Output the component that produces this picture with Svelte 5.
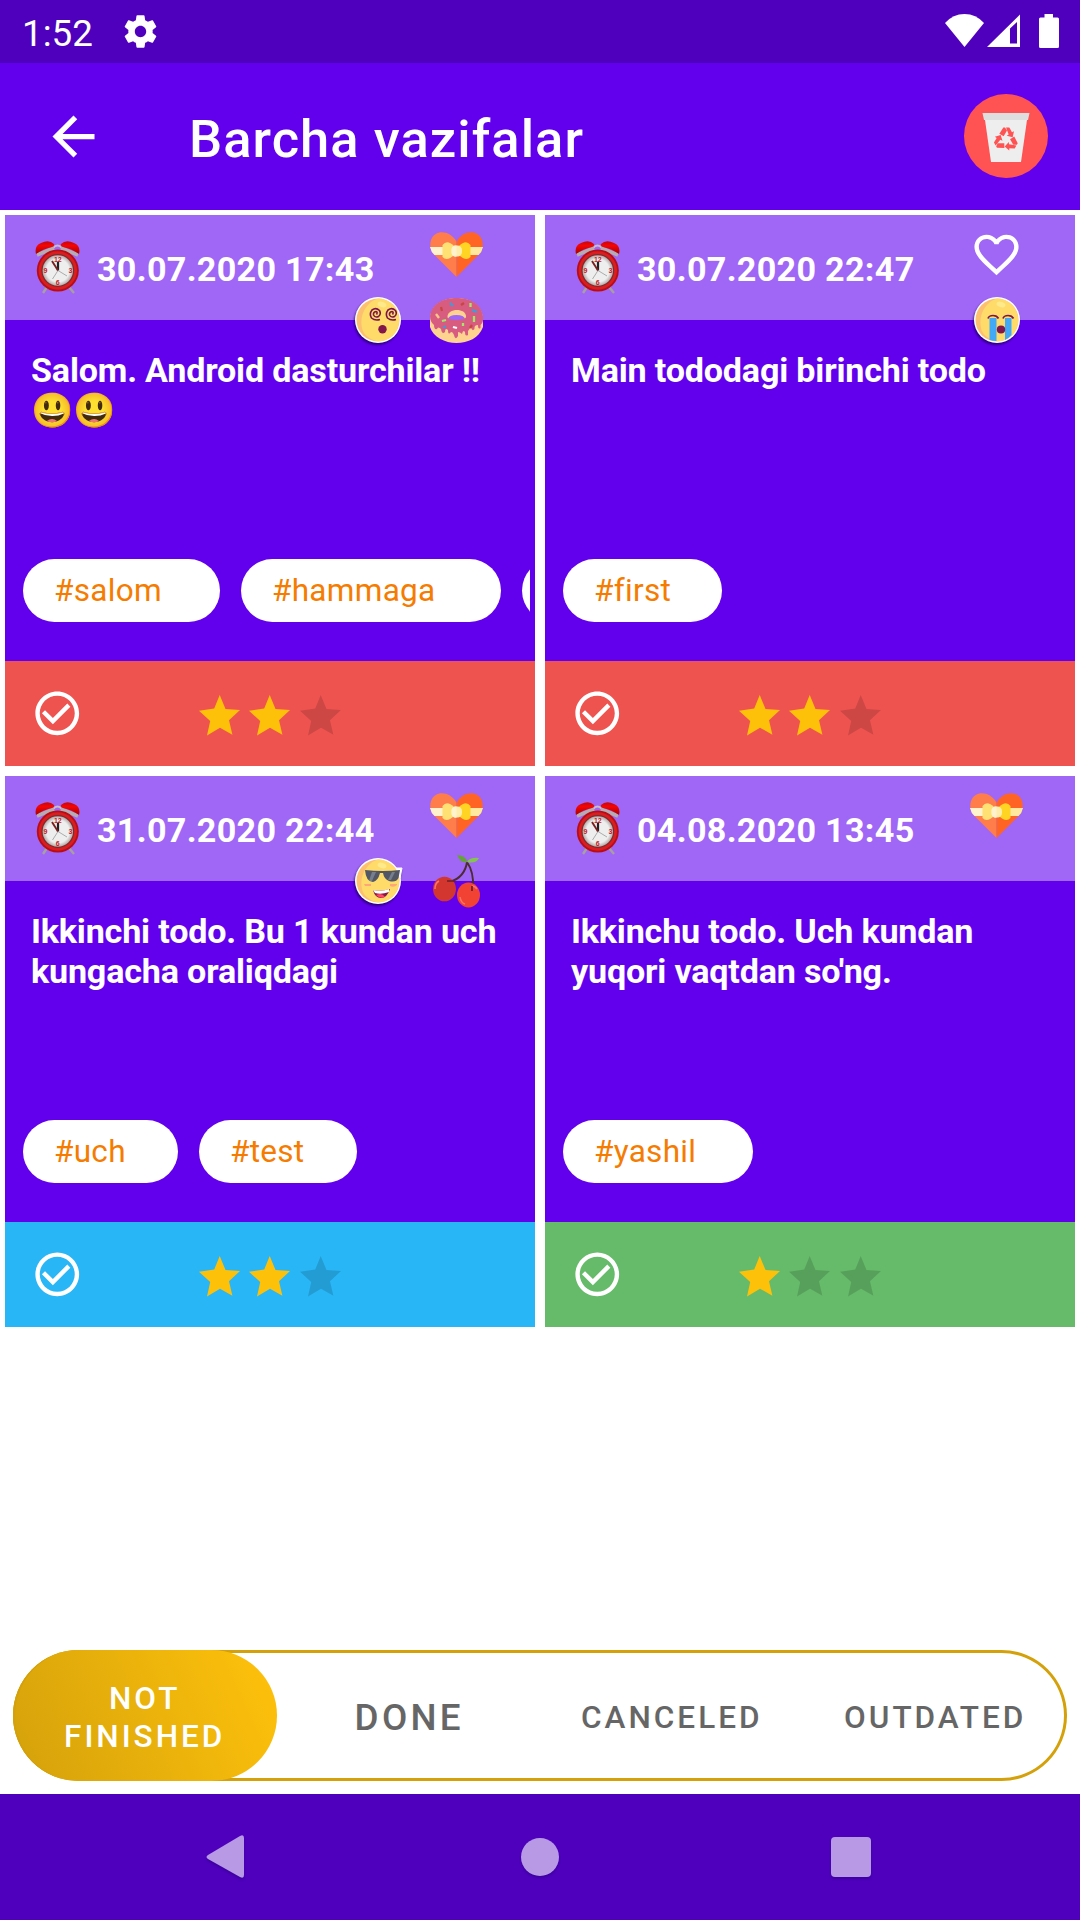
<script>
  const cards = [
    { date: '30.07.2020 17:43', text: 'Salom. Android dasturchilar !! 😃😃', tags: [['#salom', 197], ['#hammaga', 260], ['', 197]], tone: 'red', stars: 2, loved: true, faces: ['dizzy', 'donut'] },
    { date: '30.07.2020 22:47', text: 'Main tododagi birinchi todo', tags: [['#first', 159]], tone: 'red', stars: 2, loved: false, faces: ['crying'] },
    { date: '31.07.2020 22:44', text: 'Ikkinchi todo. Bu 1 kundan uch kungacha oraliqdagi', tags: [['#uch', 155], ['#test', 158]], tone: 'blue', stars: 2, loved: true, faces: ['cool', 'cherry'] },
    { date: '04.08.2020 13:45', text: "Ikkinchu todo. Uch kundan yuqori vaqtdan so'ng.", tags: [['#yashil', 190]], tone: 'green', stars: 1, loved: true, faces: [] }
  ];
</script>

{#snippet clock()}
  <svg class="clock" viewBox="0 0 45 53">
    <defs>
      <linearGradient id="bell" x1="0" y1="0" x2="0" y2="1"><stop offset="0" stop-color="#c40808" /><stop offset=".35" stop-color="#f50505" /><stop offset="1" stop-color="#a80000" /></linearGradient>
      <radialGradient id="dial"><stop offset=".75" stop-color="#eeeeee" /><stop offset="1" stop-color="#b5aaaa" /></radialGradient>
    </defs>
    <path d="M12 46l-4 6M34 46l5 6" stroke="#a7a0a0" stroke-width="2.4" />
    <path d="M18 7Q22.5 2 27 7" fill="none" stroke="#c8bdc4" stroke-width="2" />
    <path d="M2 14L19 7M43 14L26 7" stroke="#b5adb2" stroke-width="3.6" />
    <path d="M1 13Q-1 5 6 2Q14-2 19 3Q20 5 17 6Q8 8 1 13ZM44 13Q46 5 39 2Q31-2 26 3Q25 5 28 6Q37 8 44 13Z" fill="url(#bell)" />
    <circle cx="22.8" cy="29.5" r="21" fill="#b80d12" />
    <circle cx="22.8" cy="29.5" r="19.2" fill="#da1d20" />
    <circle cx="22.8" cy="29.5" r="16.4" fill="#7d2a2a" />
    <circle cx="22.8" cy="29.5" r="15.2" fill="url(#dial)" />
    <g class="numerals"><text x="22.8" y="21.4">12</text><text x="35.4" y="32">3</text><text x="22.8" y="44.3">6</text><text x="10.4" y="32.4">9</text></g>
    <path d="M23 29.5V20.8" stroke="#222" stroke-width="2.2" />
    <path d="M23 29.5L17 20" stroke="#7a2222" stroke-width="1.9" />
    <path d="M23 29.5L32 35M23 29.5L17.5 38" stroke="#9b9b9b" stroke-width=".8" />
  </svg>
{/snippet}

{#snippet giftHeart()}
  <svg class="mark" viewBox="0 0 53 53">
    <path d="M26.5 13.5C20 2 5 1 1 12C-.5 16 0 22 4 26.500L26.500 49Z" fill="#ff7c4b" />
    <path d="M26.500 13.500C33 2 48 1 52 12C53.500 16 53 22 49 26.500L26.500 49Z" fill="#ff6425" />
    <path d="M0 19H26.500V27H4.500Q1 24 0 19Z" fill="#fff3cd" />
    <path d="M53 19H26.500V27H48.500Q52 24 53 19Z" fill="#ffe99f" />
    <path d="M24 18Q17 11 12.500 17V29Q17 34 24 27Z" fill="#ffe073" />
    <path d="M29 18Q36 11 40.500 17V29Q36 34 29 27Z" fill="#ffd422" />
    <rect x="21.500" y="17.500" width="10.500" height="11" rx="4.500" fill="#ffedac" />
    <path d="M26.500 17.500H25A4 4 0 0 0 21.500 22V25A4 4 0 0 0 26.500 28.500Z" fill="#fff3cd" />
  </svg>
{/snippet}

{#snippet face(kind)}
  {#if kind === 'donut'}
    <svg class="mark" viewBox="0 0 53 53">
      <path fill-rule="evenodd" d="M0 23C2 10 14 4 26.500 4S51 10 53 23V33C49 44 38 49 26.500 49S3 43 0 33ZM18 25Q26.500 30 35 25Q34 21 26.500 21T18 25Z" fill="#fdd38f" />
      <path fill-rule="evenodd" d="M0 22C2 9 14 4 26.500 4S51 9 53 22Q54 28 50.500 31V34Q48 36 48 31Q44 31 44.500 35Q42 38 41 33L38 37V41Q35 43 35 38Q33 35 32 40Q30 38 28 38V42Q25 47 24 41Q22 36 20 39Q18 41 18 36Q15 33 15 38Q12 41 11 35Q8 32 7 35Q4 36 4 31Q0 28 0 22ZM17.500 23C17.500 27 35.500 27 36 23C37 13.500 17 13.500 17.500 23Z" fill="#d85c80" />
      <g fill="none" stroke-width="2.300">
        <path d="M20 9L23 12M42 16L47 18M13.500 34L15.500 32" stroke="#3a9edc" />
        <path d="M11 13L12 17M31 11L34 9M40 34L42 31" stroke="#c5483f" />
        <path d="M40.500 9V13M44 22V28M12 27L16 26M33 29V32" stroke="#9eea68" />
        <path d="M6 20L9 24" stroke="#f8c889" /><path d="M23 33L27 34" stroke="#fff" />
      </g>
    </svg>
  {:else if kind === 'cherry'}
    <svg class="mark" viewBox="0 0 53 53">
      <path d="M37 7Q35 22 20 27M37 7Q44 17 43 33" fill="none" stroke="#4d2b31" stroke-width="1.900" />
      <path d="M27 0Q35 0 37.500 7Q31 9 27 0Z" fill="#64a436" /><path d="M37 7Q40 2 49 3Q46 9 37 7Z" fill="#84c451" />
      <ellipse cx="14.500" cy="34" rx="11.500" ry="12.300" fill="#d3362e" /><ellipse cx="38.500" cy="40" rx="11.500" ry="12.500" fill="#f24233" />
      <path d="M5 34Q5 28 9 26M30 42Q31 48 35 49M42 31Q45 31 47 34" fill="none" stroke="#ff746b" stroke-width="1.500" />
      <path d="M17 26L25 26M42 36V31" stroke="#67212a" stroke-width="1.700" />
    </svg>
  {:else}
    <svg class="mark shade" viewBox="0 0 53 53">
      {#if kind === 'cool'}<path d="M41 13L51 13L49 23Z" fill="#fff" stroke="#fff" />{/if}
      <circle cx="27" cy="26" r="23" fill="#fff" />
      <circle cx="27" cy="26" r="21.500" fill="#fdc070" />
      <path d="M27.500 4.500A21.500 21.500 0 0 1 41 42C29 53 15 44 12 37C7 24 14 8 27.500 4.500Z" fill="#ffdc6a" />
      <ellipse cx="31" cy="10.500" rx="4.500" ry="2.600" fill="#ffea8b" transform="rotate(15 31 10.500)" />
      {#if kind === 'dizzy'}
        {#each [0, 16] as shift}
          <path transform="translate({shift} 0)" d="M25.500 20.500Q27 18 25 17.500Q22 18 22.500 21Q24 24 27.500 22.500Q30.500 20 28.500 16.500Q25 13 21 16Q18 20 20.500 24Q24 27 29 25.500" fill="none" stroke="#7d1749" stroke-width="1.600" />
        {/each}
        <circle cx="31.500" cy="35.200" r="4.200" fill="#82174b" />
      {:else if kind === 'crying'}
        <path d="M19.500 24H26.500V47Q23 47 19.500 46ZM35 24H41.500V41Q39 44 35 46Z" fill="#42a9f6" />
        <path d="M18 24.500Q19 21.500 23 21.500T28.500 24.500M33 24.500Q34 21.500 38 21.500T43.500 24.500" fill="none" stroke="#7b1749" stroke-width="1.700" />
        <ellipse cx="31" cy="35.500" rx="4.200" ry="4" fill="#82174b" />
      {:else}
        <path d="M14 15Q32 17 49 15L47.500 23Q45 28 38 26Q33 24 32 18H29Q27 26 22 27Q15 27 14 15Z" fill="#535765" />
        <path d="M21 17L18 26H21L25 17ZM41 17L37 25H40L44 17Z" fill="#777f8e" />
        <path d="M13 29H20V31H14ZM39 29H46V30Q43 33 39 31Z" fill="#ffa579" />
        <path d="M22 35Q30 37 39 34Q36 43 30 43T22 35Z" fill="#861846" /><path d="M22 35Q31 37 38 34V37Q30 40 24 38Z" fill="#fff" /><path d="M25 40Q31 37 34 42Q29 44 25 40Z" fill="#ff4664" />
      {/if}
    </svg>
  {/if}
{/snippet}

<div class="screen">
  <div class="status">
    <span class="time">1:52</span>
    <svg class="gear" viewBox="0 0 24 24"><path fill="#fff" d="M19.430 12.980c.04-.32.07-.64.07-.98s-.03-.66-.07-.98l2.110-1.650c.19-.15.24-.42.12-.64l-2-3.460c-.12-.22-.39-.3-.61-.22l-2.490 1c-.52-.4-1.080-.73-1.690-.98l-.38-2.650C14.460 2.180 14.250 2 14 2h-4c-.25 0-.46.18-.49.42l-.38 2.650c-.61.25-1.170.59-1.690.98l-2.490-1c-.23-.09-.49 0-.61.22l-2 3.460c-.13.22-.07.49.12.64l2.110 1.650c-.04.32-.07.65-.07.98s.03.66.07.98l-2.110 1.650c-.19.15-.24.42-.12.64l2 3.460c.12.22.39.3.61.22l2.490-1c.52.4 1.080.73 1.690.98l.38 2.650c.03.24.24.42.49.42h4c.25 0 .46-.18.49-.42l.38-2.650c.61-.25 1.170-.59 1.690-.98l2.490 1c.23.09.49 0 .61-.22l2-3.460c.12-.22.07-.49-.12-.64l-2.110-1.650zM12 15.500c-1.930 0-3.500-1.570-3.500-3.500s1.570-3.500 3.500-3.500 3.500 1.570 3.500 3.500-1.570 3.500-3.500 3.500z" /></svg>
    <svg class="signals" viewBox="0 0 115 35" fill="#fff">
      <path d="M0 9Q8 0 19.500 0T39 9L19.500 33Z" />
      <path fill-rule="evenodd" d="M42 33L75 .500V33ZM65 14.500V29.500H72V8Z" />
      <path d="M99.500 0H108V3.500H112.500Q114 3.500 114 5V32.500Q114 34 112.500 34H95.500Q94 34 94 32.500V5Q94 3.500 95.500 3.500H99.500Z" />
    </svg>
  </div>

  <header class="appbar">
    <svg class="back" viewBox="0 0 24 24"><path fill="#fff" d="M20 11H7.830l5.590-5.590L12 4l-8 8 8 8 1.410-1.410L7.830 13H20v-2z" /></svg>
    <h1>Barcha vazifalar</h1>
    <svg class="trash" viewBox="0 0 84 84">
      <circle cx="42" cy="42" r="42" fill="#ff5353" />
      <path d="M21 26H63L57 68H27Z" fill="#eeeeee" /><path d="M18.500 19H65.500L64 26H20Z" fill="#dedede" />
      <g fill="#ff5353">
        {#each [0, 120, 240] as turn}
          <path transform="translate(42 45.500) rotate({turn}) scale(.333)" d="M-8-36L-20-17L-7-10L3-27L-3-36ZM0-36H10L18-22L24-25L20-7L2-11L8-15Z" />
        {/each}
      </g>
    </svg>
  </header>

  <main class="grid">
    {#each cards as card}
      <article class="card">
        <div class="head">{@render clock()}<time>{card.date}</time></div>
        <div class="marks">
          {#if card.loved}{@render giftHeart()}{:else}
            <svg class="mark" viewBox="0 0 24 24"><path fill="#fff" d="M16.500 3c-1.740 0-3.410.81-4.500 2.090C10.910 3.810 9.240 3 7.500 3 4.420 3 2 5.420 2 8.500c0 3.780 3.400 6.860 8.550 11.540L12 21.350l1.450-1.320C18.600 15.360 22 12.280 22 8.500 22 5.420 19.580 3 16.500 3zm-4.400 15.550l-.1.100-.1-.1C7.140 14.240 4 11.390 4 8.500 4 6.500 5.500 5 7.500 5c1.540 0 3.040.99 3.570 2.360h1.870C13.460 5.990 14.960 5 16.500 5c2 0 3.500 1.500 3.500 3.500 0 2.890-3.140 5.740-7.900 10.050z" /></svg>
          {/if}
          <div class="faces">{#each card.faces as kind}{@render face(kind)}{/each}</div>
        </div>
        <div class="body">
          <p>{card.text}</p>
          <div class="tags">{#each card.tags as [label, width]}<span class="tag" style:width="{width}px">{label}</span>{/each}</div>
        </div>
        <div class="foot {card.tone}">
          <svg class="check" viewBox="0 0 24 24"><path fill="#fff" d="M16.590 7.580L10 14.170l-3.590-3.580L5 12l5 5 8-8zM12 2C6.480 2 2 6.480 2 12s4.480 10 10 10 10-4.480 10-10S17.520 2 12 2zm0 18c-4.420 0-8-3.580-8-8s3.580-8 8-8 8 3.580 8 8-3.580 8-8 8z" /></svg>
          <div class="stars">
            {#each [0, 1, 2] as n}
              <svg class="star" class:on={n < card.stars} viewBox="0 0 41 41"><path d="M20.700 0L26.500 14L41 15L30 25.300L33.400 39.800L21 32.700L8 40.500L11.200 26L0 15.700L15.200 13.500Z" /></svg>
            {/each}
          </div>
        </div>
      </article>
    {/each}
  </main>

  <div class="tabs">
    <div class="tab active">NOT<br />FINISHED</div>
    <div class="tab large">DONE</div>
    <div class="tab">CANCELED</div>
    <div class="tab">OUTDATED</div>
  </div>

  <nav class="nav">
    <svg viewBox="0 0 1080 126" fill="#b899e5">
      <path d="M208 61L240 42Q244 40 244 44V81Q244 85 240 83L208 65Q205 63 208 61Z" />
      <circle cx="540" cy="63" r="19" />
      <rect x="831" y="43" width="40" height="40" rx="4" />
    </svg>
  </nav>
</div>

<style>
  :global(body) { background: #fff; }
  .screen { width: 1080px; height: 1920px; display: flex; flex-direction: column; overflow: hidden; background: #fff; font-family: Roboto, "Noto Color Emoji", sans-serif; }
  svg { display: block; flex: none; }
  .status { height: 63px; flex: none; box-sizing: border-box; padding: 0 20px 0 22px; background: #4e00bd; display: flex; align-items: center; color: #fff; }
  .time { width: 99px; font-size: 36.750px; line-height: 44px; padding-top: 4px; }
  .gear { width: 39px; height: 39px; }
  .signals { width: 115px; height: 35px; margin: 0 0 14px auto; align-self: flex-end; }
  .appbar { height: 147px; flex: none; box-sizing: border-box; background: #6200ee; color: #fff; display: flex; align-items: center; padding: 0 32px 0 42px; }
  .back { width: 63px; height: 63px; }
  h1 { margin: 4px auto 0 84px; font-size: 52.500px; line-height: 62px; font-weight: 550; letter-spacing: 1.05px; }
  .trash { width: 84px; height: 84px; margin-bottom: 2px; }
  .grid { flex: none; display: grid; grid-template-columns: 530px 530px; gap: 10px; padding: 5px; }
  .card { position: relative; height: 551px; display: flex; flex-direction: column; background: #6200ee; color: #fff; }
  .head { height: 105px; flex: none; display: flex; align-items: center; background: rgba(255, 255, 255, .4); padding-left: 30px; }
  .clock { width: 45px; height: 53px; }
  .numerals { font: bold 7px "Liberation Sans", sans-serif; fill: #c21e24; text-anchor: middle; }
  time { margin: 2px 0 0 17px; font-size: 34.125px; font-weight: 700; line-height: 40px; letter-spacing: .3px; }
  .marks { position: absolute; right: 52px; top: 13px; display: flex; flex-direction: column; align-items: flex-end; gap: 13px; }
  .mark { width: 53px; height: 53px; }
  .shade { filter: drop-shadow(-1px 2px 1px rgba(20, 0, 70, .65)); }
  .faces { display: flex; gap: 26px; }
  .body { flex: 1; min-height: 0; display: flex; flex-direction: column; justify-content: space-between; padding: 30px 5px 39px 18px; }
  p { margin: 0 0 0 8px; width: 480px; font-size: 34.125px; line-height: 40px; font-weight: 700; letter-spacing: -.19px; }
  .tags { display: flex; gap: 21px; overflow: hidden; }
  .tag { box-sizing: border-box; height: 63px; flex: none; padding-left: 31px; border-radius: 32px; background: #fff; color: #f57c00; font-size: 31.500px; line-height: 63px; letter-spacing: .3px; }
  .foot { height: 105px; flex: none; box-sizing: border-box; display: flex; align-items: center; padding-left: 26px; }
  .red { background: #ef5350; }
  .blue { background: #29b6f6; }
  .green { background: #66bb6a; }
  .check { width: 52.500px; height: 52.500px; }
  .stars { display: flex; gap: 9.400px; margin: 3px 0 0 115.500px; }
  .star { width: 41px; height: 41px; fill: rgba(0, 0, 0, .14); }
  .star.on { fill: #fdc10a; }
  .tabs { box-sizing: border-box; height: 131px; margin: auto 13px 13px 13px; flex: none; display: grid; grid-template-columns: repeat(4, 1fr); border-radius: 66px; box-shadow: inset 0 0 0 3px #d4a10b; color: #666; font-size: 31.500px; line-height: 37.700px; font-weight: 500; letter-spacing: 3px; text-align: center; }
  .tab { display: flex; align-items: center; justify-content: center; padding: 4px 0 0 0; }
  .tab.active { color: #fff; border-radius: 66px; background: linear-gradient(65deg, #d4a10b, #ffc20b); box-shadow: inset 3px 0 0 -1px #d4a10b; }
  .tab.large { font-size: 36.750px; letter-spacing: 3.280px; padding-left: 2px; }
  .nav { height: 126px; flex: none; background: #4e00bd; }
  .nav svg { width: 1080px; height: 126px; filter: drop-shadow(0 2px 1px rgba(30, 0, 100, .35)); }
</style>
